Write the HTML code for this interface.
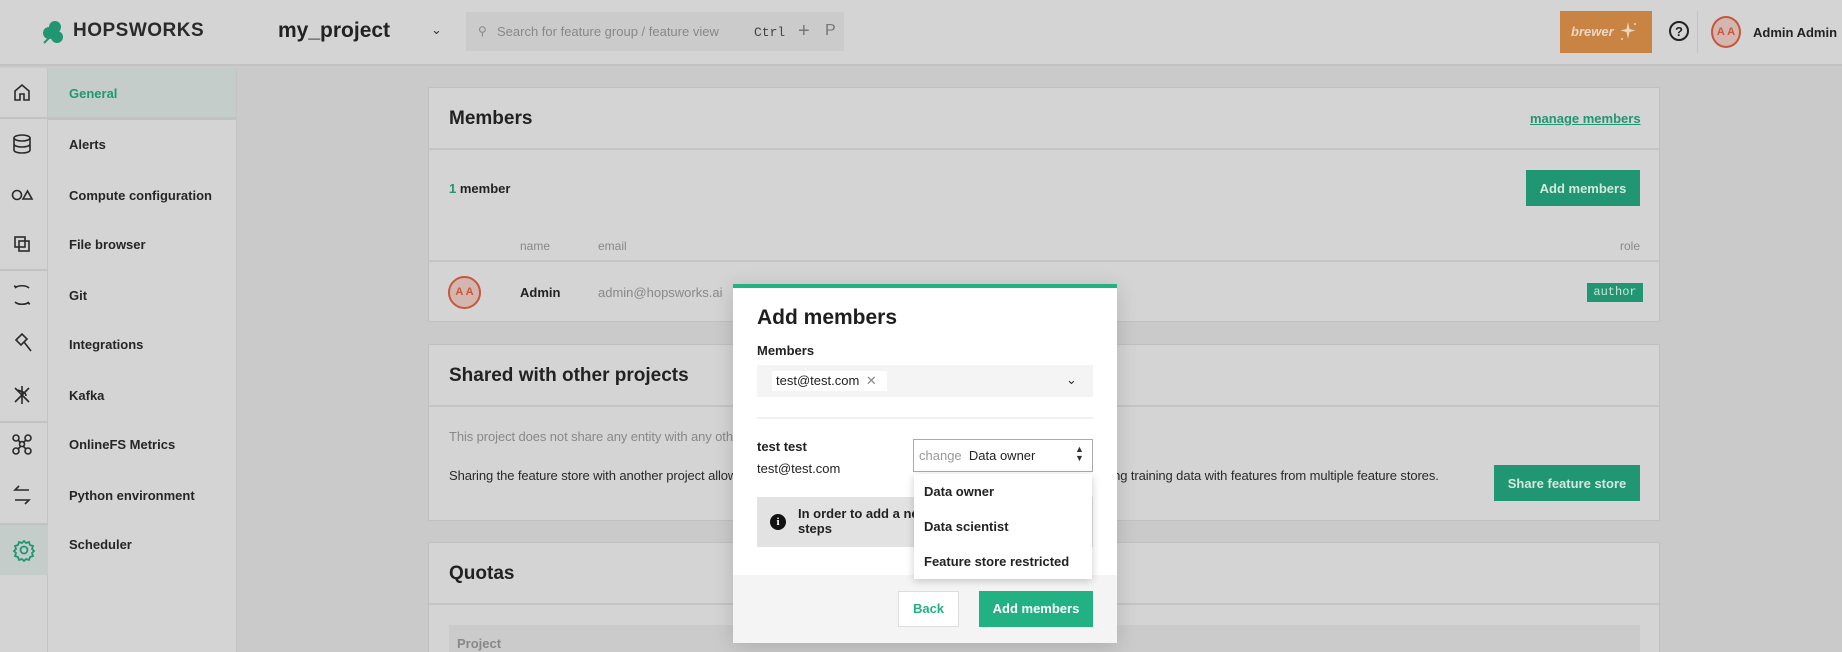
<!DOCTYPE html>
<html><head><meta charset="utf-8"><style>
*{box-sizing:border-box;margin:0;padding:0}
html,body{width:1842px;height:652px;overflow:hidden}
body{background:#cacaca;font-family:"Liberation Sans",sans-serif;color:#222;position:relative}
.a{position:absolute}
.top{left:0;top:0;width:1842px;height:66px;background:#d4d4d4;border-bottom:2px solid #c2c2c2}
.icol{left:0;top:68px;width:48px;height:584px;background:#d4d4d4;border-right:1px solid #c4c4c4}
.nav{left:48px;top:68px;width:189px;height:584px;background:#d4d4d4;border-right:1px solid #c4c4c4}
.nav div{position:absolute;left:21px;font-size:13px;font-weight:bold;color:#262626}
.card{background:#d4d4d4;border:1px solid #c0c0c0}
.hd{font-size:19px;font-weight:bold;color:#222}
.line{height:2px;background:#c4c4c4}
.btn{background:#219672;color:#d4e8df;font-size:13px;font-weight:bold;display:flex;align-items:center;justify-content:center}
</style></head><body>
<div class="a top"></div>
<svg class="a" style="left:41px;top:19px" width="25" height="26" viewBox="0 0 25 26"><circle cx="14" cy="8" r="6" fill="#219672"/><circle cx="8" cy="14" r="6" fill="#219672"/><circle cx="16" cy="18" r="6" fill="#219672"/><path d="M3 24l6-6" stroke="#219672" stroke-width="2"/></svg>
<div class="a" style="left:73px;top:20px;font-size:19px;font-weight:bold;letter-spacing:0.5px;color:#2a2a2a">HOPSWORKS</div>
<div class="a" style="left:278px;top:19px;font-size:21px;font-weight:bold;color:#222">my_project</div>
<div class="a" style="left:431px;top:22px;font-size:13px;color:#333">&#8964;</div>
<div class="a" style="left:466px;top:12px;width:378px;height:39px;background:#cbcbcb"></div>
<div class="a" style="left:478px;top:24px;font-size:12px;color:#888">&#9906;</div>
<div class="a" style="left:497px;top:24px;font-size:13px;color:#888">Search for feature group / feature view</div>
<div class="a" style="left:754px;top:25px;font-size:13px;font-family:'Liberation Mono',monospace;color:#444">Ctrl</div>
<div class="a" style="left:798px;top:20px;font-size:20px;color:#777">+</div>
<div class="a" style="left:825px;top:22px;font-size:16px;color:#777">P</div>
<div class="a" style="left:1560px;top:11px;width:92px;height:42px;background:#c98342"></div>
<div class="a" style="left:1571px;top:24px;font-size:13px;font-style:italic;font-weight:bold;color:#ead7c3">brewer</div>
<svg class="a" style="left:1620px;top:21px" width="18" height="20" viewBox="0 0 18 20" fill="#ead7c3"><path d="M8 1l1.5 7 6 1.5-6 1.5L8 18l-1.5-7-6-1.5 6-1.5z"/><circle cx="15" cy="3" r="1"/><circle cx="2" cy="18" r="1"/></svg>
<div class="a" style="left:1669px;top:21px;width:20px;height:20px;border:2px solid #222;border-radius:50%;font-size:13px;font-weight:bold;text-align:center;line-height:17px">?</div>
<div class="a" style="left:1697px;top:11px;width:1px;height:42px;background:#c4c4c4"></div>
<div class="a" style="left:1711px;top:16px;width:30px;height:32px;border:2px solid #c9553a;border-radius:50%;background:#d4b6b0;color:#c9553a;font-size:11px;font-weight:bold;text-align:center;line-height:28px">A A</div>
<div class="a" style="left:1753px;top:25px;font-size:13px;font-weight:bold;color:#222">Admin Admin</div>

<div class="a icol"></div>
<div class="a" style="left:0;top:117px;width:48px;height:2px;background:#c2c2c2"></div>
<div class="a" style="left:0;top:269px;width:48px;height:2px;background:#c2c2c2"></div>
<div class="a" style="left:0;top:421px;width:48px;height:2px;background:#c2c2c2"></div>
<div class="a" style="left:0;top:523px;width:48px;height:2px;background:#c2c2c2"></div>
<div class="a" style="left:0;top:525px;width:48px;height:50px;background:#c4cdc9"></div>
<svg class="a" style="left:0;top:68px" width="48" height="520" viewBox="0 0 48 520" fill="none" stroke="#2a2a2a" stroke-width="1.6">
<path d="M15 32v-9l7-6 7 6v9h-5v-6h-4v6z"/>
<ellipse cx="22" cy="70" rx="8" ry="3"/><path d="M14 70v12c0 4 16 4 16 0V70M14 76c0 4 16 4 16 0"/>
<circle cx="17" cy="127" r="4.5"/><path d="M23 131l4.5-8 4.5 8z"/>
<rect x="15" y="169" width="10" height="10"/><rect x="19" y="173" width="10" height="10"/>
<path d="M15 220c3-3 11-3 14 0M15 234c3 3 11 3 14 0M14 218l3 1M30 236l-3-1"/>
<path d="M16 272l6-6 5 5-6 6zM24 274l7 9"/>
<path d="M15 320l14 14M29 320l-14 14M22 318v18M18 322c4 2 8 2 8 6"/>
<circle cx="16" cy="370" r="3"/><circle cx="28" cy="370" r="3"/><circle cx="16" cy="383" r="3"/><circle cx="28" cy="383" r="3"/><circle cx="22" cy="376" r="2.5"/><path d="M18 372l3 3M26 372l-3 3M18 381l3-3M26 381l-3-3"/>
<path d="M29 422H15l4-4M15 432h14l-4 4"/>
</svg>
<svg class="a" style="left:12px;top:538px" width="24" height="24" viewBox="0 0 24 24" fill="none" stroke="#219672" stroke-width="1.8"><circle cx="12" cy="12" r="3.5"/><path d="M12 3l2 2 3-1 1 3 3 1-1 3 2 2-2 2 1 3-3 1-1 3-3-1-2 2-2-2-3 1-1-3-3-1 1-3-2-2 2-2-1-3 3-1 1-3 3 1z"/></svg>

<div class="a nav">
<div style="left:0;top:0;width:188px;height:49px;background:#c4cdc9"></div>
<div style="left:0;top:49px;width:188px;height:3px;background:#c2c2c2"></div>
<div style="top:18px;color:#219672">General</div>
<div style="top:69px">Alerts</div>
<div style="top:120px">Compute configuration</div>
<div style="top:169px">File browser</div>
<div style="top:220px">Git</div>
<div style="top:269px">Integrations</div>
<div style="top:320px">Kafka</div>
<div style="top:369px">OnlineFS Metrics</div>
<div style="top:420px">Python environment</div>
<div style="top:469px">Scheduler</div>
</div>

<div class="a card" style="left:428px;top:87px;width:1232px;height:235px"></div>
<div class="a hd" style="left:449px;top:108px">Members</div>
<div class="a" style="left:1530px;top:111px;font-size:13px;font-weight:bold;color:#219672;text-decoration:underline">manage members</div>
<div class="a line" style="left:429px;top:148px;width:1230px"></div>
<div class="a" style="left:449px;top:181px;font-size:13px;font-weight:bold"><span style="color:#219672">1</span> member</div>
<div class="a btn" style="left:1526px;top:170px;width:114px;height:36px">Add members</div>
<div class="a" style="left:520px;top:239px;font-size:12px;color:#888">name</div>
<div class="a" style="left:598px;top:239px;font-size:12px;color:#888">email</div>
<div class="a" style="left:1620px;top:239px;font-size:12px;color:#888">role</div>
<div class="a line" style="left:429px;top:260px;width:1230px"></div>
<div class="a" style="left:448px;top:276px;width:33px;height:33px;border:2px solid #c9553a;border-radius:50%;background:#d4b6b0;color:#c9553a;font-size:11px;font-weight:bold;text-align:center;line-height:29px">A A</div>
<div class="a" style="left:520px;top:285px;font-size:13px;font-weight:bold">Admin</div>
<div class="a" style="left:598px;top:285px;font-size:13px;color:#888">admin@hopsworks.ai</div>
<div class="a" style="left:1587px;top:283px;width:56px;height:19px;background:#219672;color:#cde3d9;font-family:'Liberation Mono',monospace;font-size:12px;text-align:center;line-height:19px">author</div>

<div class="a card" style="left:428px;top:344px;width:1232px;height:177px"></div>
<div class="a hd" style="left:449px;top:365px">Shared with other projects</div>
<div class="a line" style="left:429px;top:405px;width:1230px"></div>
<div class="a" style="left:449px;top:429px;font-size:13px;color:#888;letter-spacing:-0.1px">This project does not share any entity with any other project.</div>
<div class="a" style="left:449px;top:468px;font-size:13px;color:#2a2a2a;letter-spacing:-0.1px">Sharing the feature store with another project allows the other project to read the data from this feature store for creating training data with features from multiple feature stores.</div>
<div class="a btn" style="left:1494px;top:465px;width:146px;height:36px">Share feature store</div>

<div class="a card" style="left:428px;top:542px;width:1232px;height:120px"></div>
<div class="a hd" style="left:449px;top:563px">Quotas</div>
<div class="a line" style="left:429px;top:603px;width:1230px"></div>
<div class="a" style="left:449px;top:625px;width:1191px;height:30px;background:#cbcbcb"></div>
<div class="a" style="left:457px;top:636px;font-size:13px;font-weight:bold;color:#888">Project</div>

<div class="a" style="left:733px;top:284px;width:384px;height:359px;background:#fff;box-shadow:0 4px 20px rgba(0,0,0,0.15)"></div>
<div class="a" style="left:733px;top:284px;width:384px;height:4px;background:#21b182"></div>
<div class="a" style="left:757px;top:306px;font-size:21px;font-weight:bold;color:#1e1e1e">Add members</div>
<div class="a" style="left:757px;top:343px;font-size:13px;font-weight:bold;color:#222">Members</div>
<div class="a" style="left:757px;top:365px;width:336px;height:32px;background:#f4f4f4"></div>
<div class="a" style="left:772px;top:371px;width:115px;height:20px;background:#fff;font-size:13px;line-height:20px;padding-left:4px;color:#222">test@test.com <span style="color:#888;margin-left:3px">&#10005;</span></div>
<div class="a" style="left:1066px;top:372px;font-size:13px;color:#333">&#8964;</div>
<div class="a" style="left:757px;top:417px;width:336px;height:2px;background:#f0f0f0"></div>
<div class="a" style="left:757px;top:439px;font-size:13px;font-weight:bold;color:#222">test test</div>
<div class="a" style="left:757px;top:461px;font-size:13px;color:#222">test@test.com</div>
<div class="a" style="left:913px;top:439px;width:180px;height:33px;border:1px solid #aaa;background:#fff"></div>
<div class="a" style="left:919px;top:448px;font-size:13px"><span style="color:#999">change</span>&nbsp; Data owner</div>
<div class="a" style="left:1075px;top:445px;font-size:9px;line-height:9px;color:#333">&#9650;<br>&#9660;</div>
<div class="a" style="left:757px;top:497px;width:336px;height:50px;background:#e2e2e2"></div>
<div class="a" style="left:770px;top:514px;width:16px;height:16px;border-radius:50%;background:#111;color:#fff;font-size:11px;font-weight:bold;text-align:center;line-height:16px;font-family:'Liberation Serif',serif">i</div>
<div class="a" style="left:798px;top:506px;font-size:13px;font-weight:bold;color:#222;line-height:15px">In order to add a new member<br>steps</div>
<div class="a" style="left:733px;top:575px;width:384px;height:68px;background:#f4f4f4"></div>
<div class="a" style="left:898px;top:591px;width:61px;height:36px;border:1px solid #ddd;background:#fff;color:#21b182;font-size:13px;font-weight:bold;text-align:center;line-height:34px">Back</div>
<div class="a" style="left:979px;top:591px;width:114px;height:36px;background:#21b182;color:#fff;font-size:13px;font-weight:bold;text-align:center;line-height:36px">Add members</div>
<div class="a" style="left:914px;top:474px;width:178px;height:105px;background:#fff;box-shadow:0 2px 8px rgba(0,0,0,0.2)"></div>
<div class="a" style="left:924px;top:484px;font-size:13px;font-weight:bold;color:#222">Data owner</div>
<div class="a" style="left:924px;top:519px;font-size:13px;font-weight:bold;color:#222">Data scientist</div>
<div class="a" style="left:924px;top:554px;font-size:13px;font-weight:bold;color:#222">Feature store restricted</div>
</body></html>
